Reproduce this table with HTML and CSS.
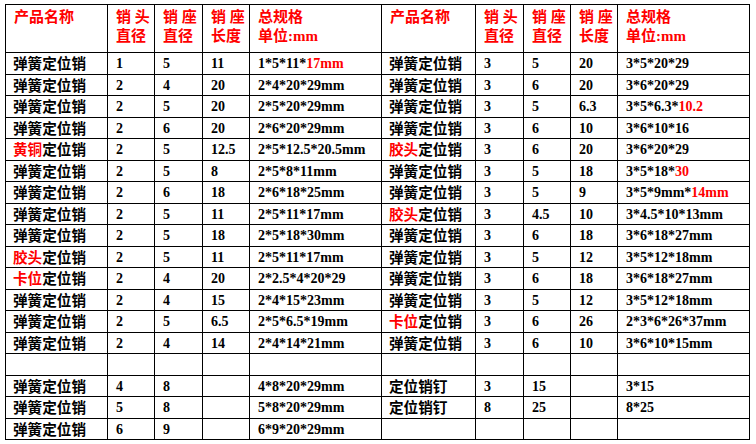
FILE: index.html
```html
<!DOCTYPE html>
<html lang="zh">
<head>
<meta charset="utf-8">
<link rel="stylesheet" href="styles.css">
</head>
<body>
<table class="spec">
  <colgroup>
    <col class="c-name"><col class="c-n"><col class="c-n2"><col class="c-n"><col class="c-spec">
    <col class="c-name2"><col class="c-n2"><col class="c-n"><col class="c-n"><col class="c-spec">
  </colgroup>
  <thead>
    <tr class="head">
      <th>产品名称</th><th>销 头<br>直径</th><th>销 座<br>直径</th><th>销 座<br>长度</th><th>总规格<br>单位:mm</th>
      <th>产品名称</th><th>销 头<br>直径</th><th>销 座<br>直径</th><th>销 座<br>长度</th><th>总规格<br>单位:mm</th>
    </tr>
  </thead>
  <tbody>
    <tr><td class="nm">弹簧定位销</td><td>1</td><td>5</td><td>11</td><td>1*5*11*<span class="red">17mm</span></td>
        <td class="nm">弹簧定位销</td><td>3</td><td>5</td><td>20</td><td>3*5*20*29</td></tr>
    <tr><td class="nm">弹簧定位销</td><td>2</td><td>4</td><td>20</td><td>2*4*20*29mm</td>
        <td class="nm">弹簧定位销</td><td>3</td><td>6</td><td>20</td><td>3*6*20*29</td></tr>
    <tr><td class="nm">弹簧定位销</td><td>2</td><td>5</td><td>20</td><td>2*5*20*29mm</td>
        <td class="nm">弹簧定位销</td><td>3</td><td>5</td><td>6.3</td><td>3*5*6.3*<span class="red">10.2</span></td></tr>
    <tr><td class="nm">弹簧定位销</td><td>2</td><td>6</td><td>20</td><td>2*6*20*29mm</td>
        <td class="nm">弹簧定位销</td><td>3</td><td>6</td><td>10</td><td>3*6*10*16</td></tr>
    <tr><td class="nm"><span class="red">黄铜</span>定位销</td><td>2</td><td>5</td><td>12.5</td><td>2*5*12.5*20.5mm</td>
        <td class="nm"><span class="red">胶头</span>定位销</td><td>3</td><td>6</td><td>20</td><td>3*6*20*29</td></tr>
    <tr><td class="nm">弹簧定位销</td><td>2</td><td>5</td><td>8</td><td>2*5*8*11mm</td>
        <td class="nm">弹簧定位销</td><td>3</td><td>5</td><td>18</td><td>3*5*18*<span class="red">30</span></td></tr>
    <tr><td class="nm">弹簧定位销</td><td>2</td><td>6</td><td>18</td><td>2*6*18*25mm</td>
        <td class="nm">弹簧定位销</td><td>3</td><td>5</td><td>9</td><td>3*5*9mm*<span class="red">14mm</span></td></tr>
    <tr><td class="nm">弹簧定位销</td><td>2</td><td>5</td><td>11</td><td>2*5*11*17mm</td>
        <td class="nm"><span class="red">胶头</span>定位销</td><td>3</td><td>4.5</td><td>10</td><td>3*4.5*10*13mm</td></tr>
    <tr><td class="nm">弹簧定位销</td><td>2</td><td>5</td><td>18</td><td>2*5*18*30mm</td>
        <td class="nm">弹簧定位销</td><td>3</td><td>6</td><td>18</td><td>3*6*18*27mm</td></tr>
    <tr><td class="nm"><span class="red">胶头</span>定位销</td><td>2</td><td>5</td><td>11</td><td>2*5*11*17mm</td>
        <td class="nm">弹簧定位销</td><td>3</td><td>5</td><td>12</td><td>3*5*12*18mm</td></tr>
    <tr><td class="nm"><span class="red">卡位</span>定位销</td><td>2</td><td>4</td><td>20</td><td>2*2.5*4*20*29</td>
        <td class="nm">弹簧定位销</td><td>3</td><td>6</td><td>18</td><td>3*6*18*27mm</td></tr>
    <tr><td class="nm">弹簧定位销</td><td>2</td><td>4</td><td>15</td><td>2*4*15*23mm</td>
        <td class="nm">弹簧定位销</td><td>3</td><td>5</td><td>12</td><td>3*5*12*18mm</td></tr>
    <tr><td class="nm">弹簧定位销</td><td>2</td><td>5</td><td>6.5</td><td>2*5*6.5*19mm</td>
        <td class="nm"><span class="red">卡位</span>定位销</td><td>3</td><td>6</td><td>26</td><td>2*3*6*26*37mm</td></tr>
    <tr><td class="nm">弹簧定位销</td><td>2</td><td>4</td><td>14</td><td>2*4*14*21mm</td>
        <td class="nm">弹簧定位销</td><td>3</td><td>6</td><td>10</td><td>3*6*10*15mm</td></tr>
    <tr><td></td><td></td><td></td><td></td><td></td><td></td><td></td><td></td><td></td><td></td></tr>
    <tr><td class="nm">弹簧定位销</td><td>4</td><td>8</td><td></td><td>4*8*20*29mm</td>
        <td class="nm">定位销钉</td><td>3</td><td>15</td><td></td><td>3*15</td></tr>
    <tr><td class="nm">弹簧定位销</td><td>5</td><td>8</td><td></td><td>5*8*20*29mm</td>
        <td class="nm">定位销钉</td><td>8</td><td>25</td><td></td><td>8*25</td></tr>
    <tr><td class="nm">弹簧定位销</td><td>6</td><td>9</td><td></td><td>6*9*20*29mm</td>
        <td></td><td></td><td></td><td></td><td></td></tr>
  </tbody>
</table>
</body>
</html>
```

FILE: styles.css
```css
html, body {
  margin: 0;
  padding: 0;
  background: #ffffff;
}

body {
  padding: 4px 0 0 5px;
}

.spec {
  border-collapse: collapse;
  table-layout: fixed;
  width: 745px;
  font-family: "Liberation Serif", "Noto Sans CJK SC", serif;
  font-weight: 700;
  font-size: 14px;
  color: #000;
}

.c-name { width: 102px; }
.c-name2 { width: 94px; }
.c-n { width: 47px; }
.c-n2 { width: 48px; }
.c-spec { width: 132px; }

.spec th,
.spec td {
  border: 1px solid #000;
  padding: 0 0 0 8px;
  text-align: left;
  white-space: nowrap;
  overflow: hidden;
}

.spec td {
  height: 18.5px;
  line-height: 12px;
  vertical-align: middle;
  padding-top: 2px;
}

.head th {
  height: 44px;
  vertical-align: top;
  color: #ff0000;
  font-size: 15px;
  line-height: 19px;
  padding-top: 3px;
}

.spec td.nm {
  font-family: "Noto Sans CJK SC", sans-serif;
  font-size: 14.6px;
  padding-left: 7px;
  padding-top: 0;
  height: 20.5px;
}

.red {
  color: #ff0000;
}
```
